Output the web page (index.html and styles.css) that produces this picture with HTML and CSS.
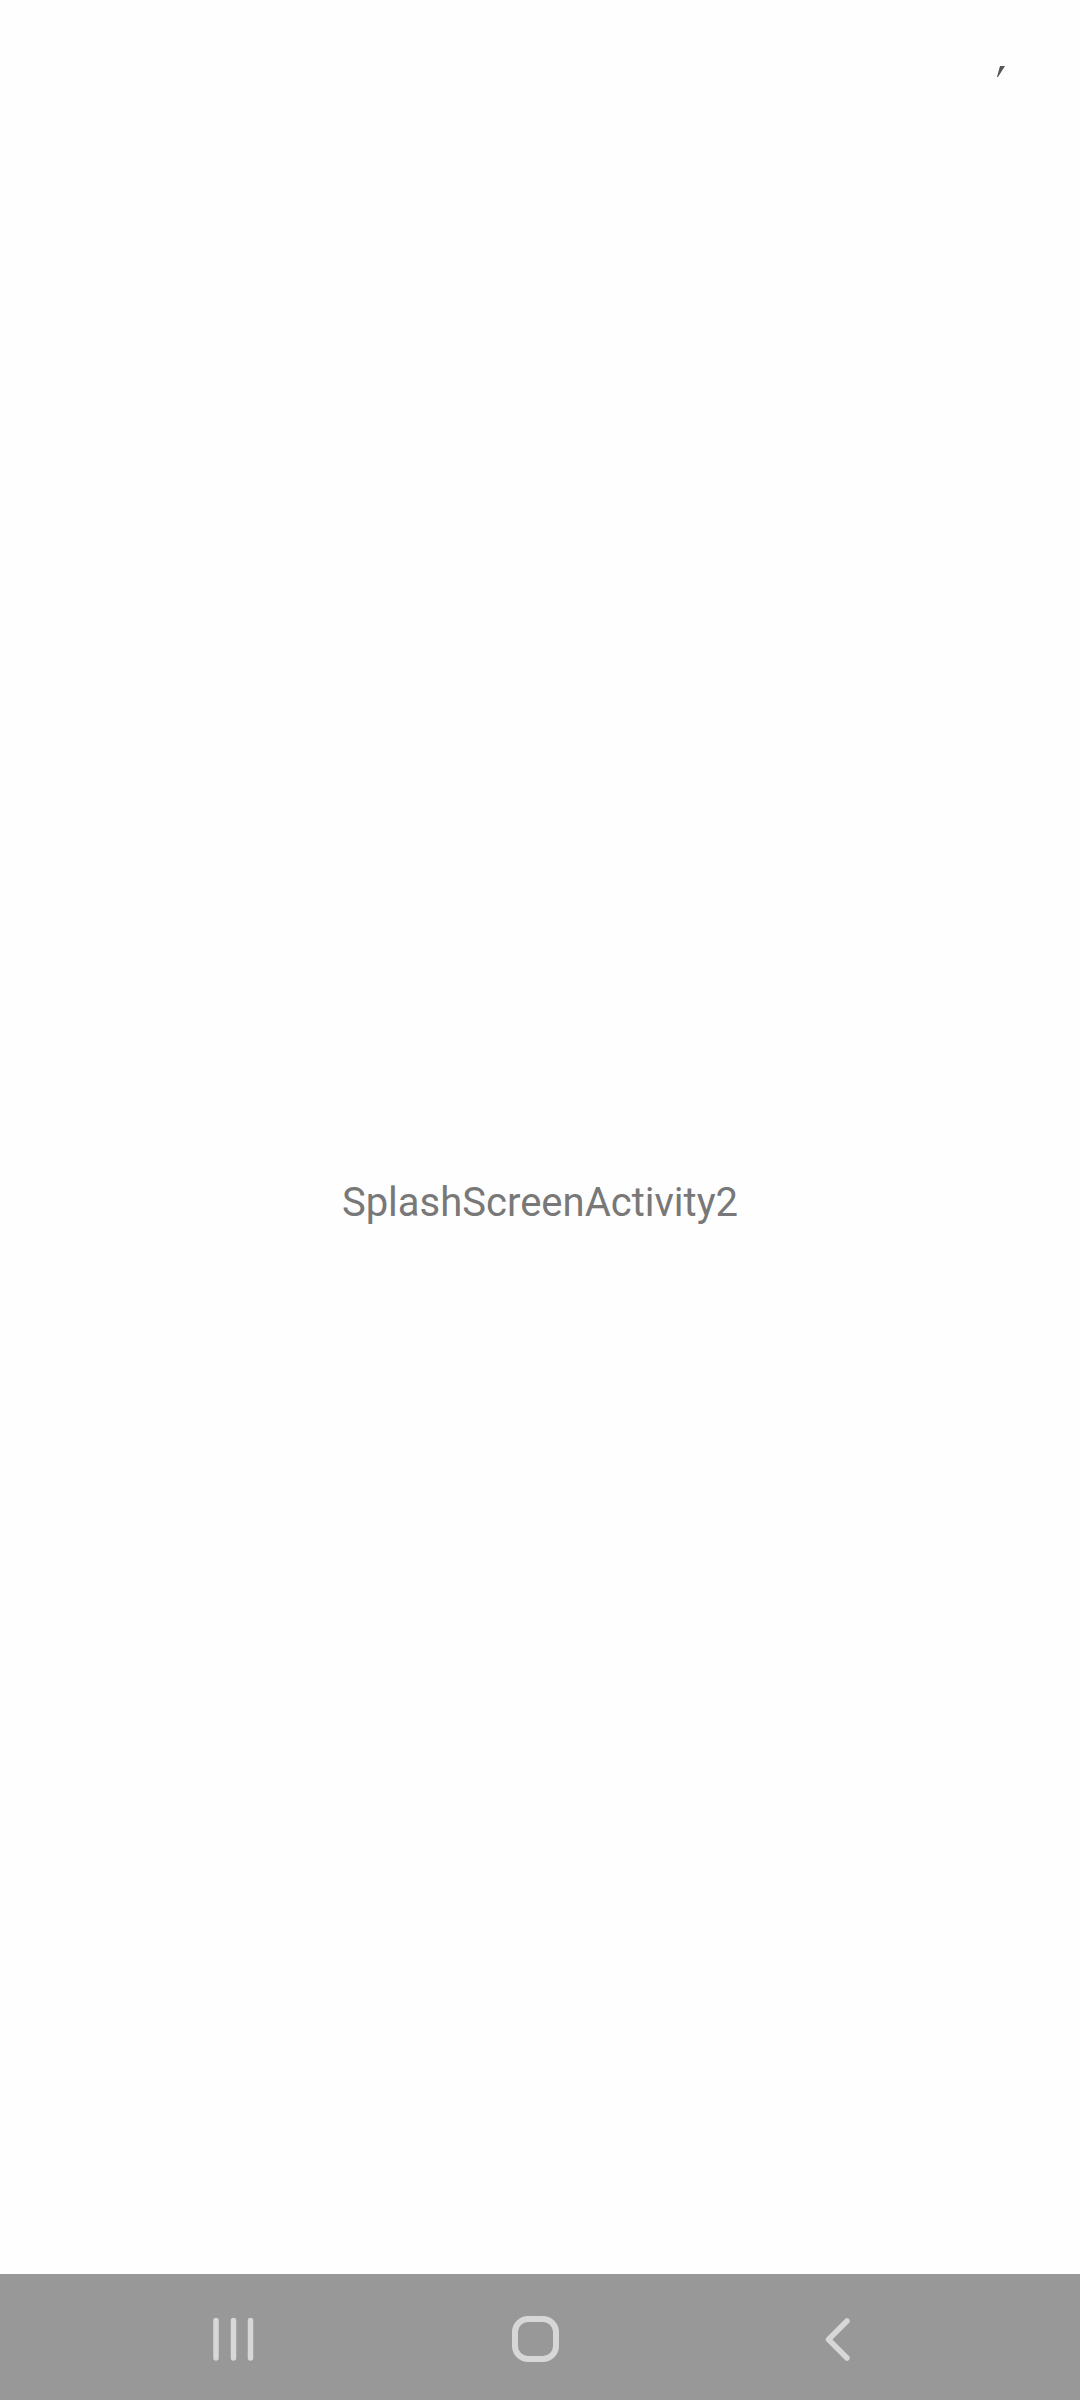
FILE: index.html
```html
<!DOCTYPE html>
<html>
<head>
<meta charset="utf-8">
<link rel="stylesheet" href="styles.css">
</head>
<body>
<div class="screen">
  <div class="status">
    <svg class="tick" width="10" height="12" viewBox="0 0 10 12"><polygon points="4,0 9,0 2,11 1,11" fill="#555"/></svg>
  </div>
  <main class="content">
    <p class="title">SplashScreenActivity2</p>
  </main>
</div>
<nav class="navbar">
  <div class="navcell">
    <svg width="60" height="60" viewBox="0 0 60 60"><g stroke="#d7d7d7" stroke-width="5.5" stroke-linecap="round"><line x1="13" y1="13.5" x2="13" y2="51"/><line x1="30.5" y1="13.5" x2="30.5" y2="51"/><line x1="47.5" y1="13.5" x2="47.5" y2="51"/></g></svg>
  </div>
  <div class="navcell">
    <svg width="60" height="60" viewBox="0 0 60 60"><rect x="10" y="12" width="41" height="40" rx="13" fill="none" stroke="#d7d7d7" stroke-width="6"/></svg>
  </div>
  <div class="navcell">
    <svg width="60" height="60" viewBox="0 0 60 60"><polyline points="40,14 21.5,32.5 40,51" fill="none" stroke="#d7d7d7" stroke-width="5.5" stroke-linecap="round" stroke-linejoin="round"/></svg>
  </div>
</nav>
</body>
</html>
```
FILE: styles.css
```css
html, body {
  margin: 0;
  padding: 0;
}
body {
  width: 1080px;
  height: 2400px;
  background: #fefefe;
  font-family: Roboto, "Noto Sans", sans-serif;
  display: flex;
  flex-direction: column;
  overflow: hidden;
}
.screen {
  height: 2274px;
  display: flex;
  flex-direction: column;
}
.status {
  height: 126px;
  display: flex;
  justify-content: flex-end;
  align-items: flex-start;
  padding: 66px 74px 0 0;
  box-sizing: border-box;
}
.tick {
  display: block;
}
.content {
  flex: 1;
  display: flex;
  align-items: center;
  justify-content: center;
  padding-top: 6px;
}
.title {
  margin: 0;
  font-size: 40px;
  color: #787878;
  line-height: 1;
}
.navbar {
  height: 126px;
  background: #989898;
  display: flex;
  align-items: center;
  padding-left: 82px;
}
.navcell {
  width: 302px;
  display: flex;
  justify-content: center;
}
.navcell svg {
  display: block;
}
```
